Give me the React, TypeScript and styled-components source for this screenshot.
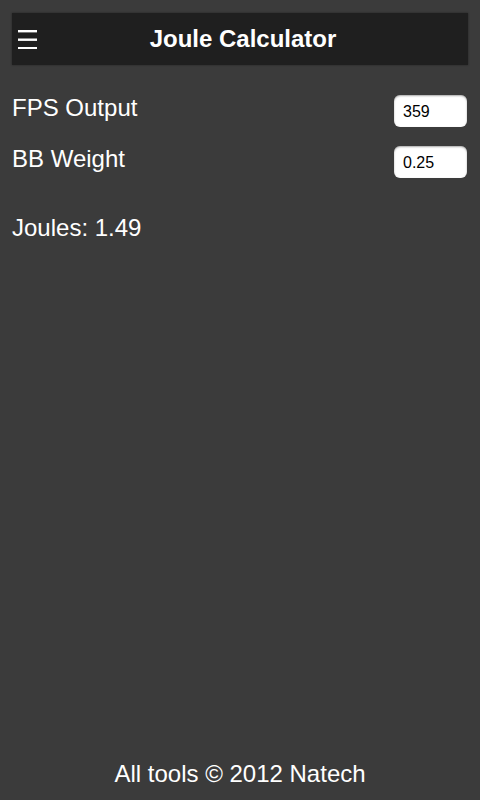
import React, { useState } from "react";
import styled, { createGlobalStyle } from "styled-components";

const GlobalStyle = createGlobalStyle`
  html, body {
    margin: 0;
    padding: 0;
    background: #3b3b3b;
  }
  body {
    font-family: "Liberation Sans", Arial, sans-serif;
    color: #fff;
  }
`;

const Page = styled.div`
  display: flex;
  flex-direction: column;
  height: 800px;
  padding: 13px 12px 0;
  box-sizing: border-box;
`;

const Header = styled.header`
  display: flex;
  align-items: center;
  height: 52px;
  background: #1f1f1f;
  box-shadow: 0 0 2px rgba(0, 0, 0, 0.4);
`;

const MenuButton = styled.button`
  display: flex;
  align-items: center;
  justify-content: center;
  width: 20px;
  height: 20px;
  margin-left: 6px;
  padding: 0;
  border: 0;
  background: none;
  cursor: pointer;
`;

const Title = styled.h1`
  flex: 1;
  margin: 0 0 0 -20px;
  text-align: center;
  font-size: 24px;
  font-weight: bold;
  color: #fff;
`;

const Form = styled.div`
  display: flex;
  flex-direction: column;
  gap: 19px;
  margin-top: 30px;
`;

const Row = styled.div`
  display: flex;
  align-items: center;
  justify-content: space-between;
  height: 32px;
`;

const Label = styled.label`
  font-size: 24px;
  margin-top: -7px;
`;

const Field = styled.input`
  width: 73px;
  height: 32px;
  box-sizing: border-box;
  padding: 2px 0 0 9px;
  margin-right: 1px;
  border: 0;
  border-radius: 6px;
  background: #fff;
  box-shadow: inset 0 1px 2px rgba(0, 0, 0, 0.35);
  font-family: "Liberation Sans", Arial, sans-serif;
  font-size: 16px;
  color: #000;
  outline: none;
`;

const Result = styled.div`
  margin-top: 36px;
  font-size: 24px;
`;

const Footer = styled.footer`
  margin-top: auto;
  padding-bottom: 12px;
  text-align: center;
  font-size: 24px;
`;

const MenuIcon = () => (
  <svg width="20" height="20" viewBox="0 0 20 20">
    <rect x="0" y="1" width="19" height="2.4" fill="#fff" />
    <rect x="0" y="9.5" width="19" height="2.4" fill="#fff" />
    <rect x="0" y="18" width="19" height="2.4" fill="#fff" />
  </svg>
);

const App = () => {
  const [fps, setFps] = useState("359");
  const [weight, setWeight] = useState("0.25");

  // 0.5 * m * v^2, fps -> m/s, grams -> kg, cut to two places
  const v = parseFloat(fps) * 0.3048;
  const m = parseFloat(weight) / 1000;
  const joules = isNaN(v) || isNaN(m) ? "0.00" : (Math.floor(0.5 * m * v * v * 100) / 100).toFixed(2);

  return (
    <>
      <GlobalStyle />
      <Page>
        <Header>
          <MenuButton aria-label="Menu">
            <MenuIcon />
          </MenuButton>
          <Title>Joule Calculator</Title>
        </Header>
        <Form>
          <Row>
            <Label>FPS Output</Label>
            <Field value={fps} onChange={(e) => setFps(e.target.value)} />
          </Row>
          <Row>
            <Label>BB Weight</Label>
            <Field value={weight} onChange={(e) => setWeight(e.target.value)} />
          </Row>
        </Form>
        <Result>Joules: {joules}</Result>
        <Footer>All tools © 2012 Natech</Footer>
      </Page>
    </>
  );
};

export default App;
